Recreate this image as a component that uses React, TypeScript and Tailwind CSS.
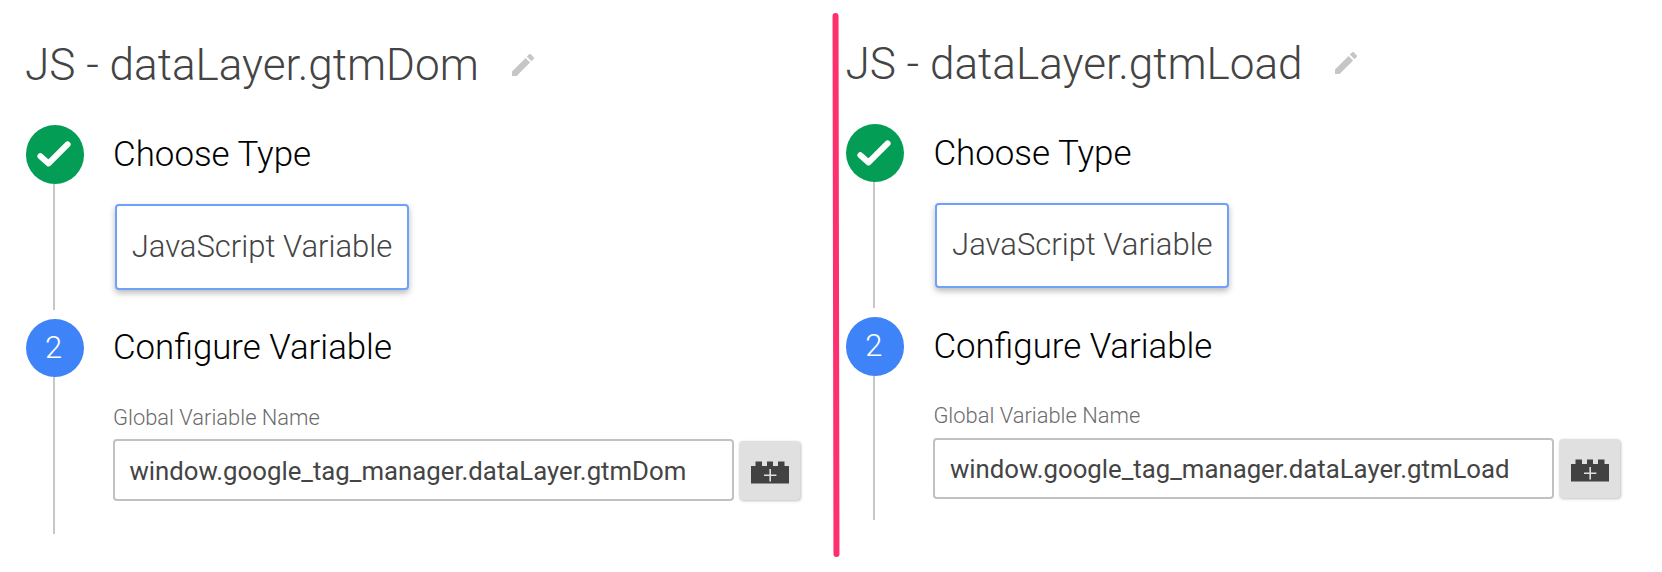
import React from "react";

type PanelProps = {
  name: string;
  titleWidth: string;
  value: string;
  className: string;
  lastLine: string;
};

function Pencil() {
  return (
    <svg viewBox="3 3 18 18" className="mt-[18.5px] h-[22px] w-[22px] shrink-0 fill-[#c6c6c6]">
      <path d="M3 17.25V21h3.75L17.81 9.94l-3.75-3.75L3 17.25zM20.71 7.04c.39-.39.39-1.02 0-1.41l-2.34-2.34c-.39-.39-1.02-.39-1.41 0l-1.83 1.83 3.75 3.75 1.83-1.83z" />
    </svg>
  );
}

function Brick() {
  return (
    <svg viewBox="0 0 38 23" className="h-[23px] w-[38px]">
      <path
        fill="#424242"
        d="M0 5h4.5V0.5h6.5V5h5V0.5h6V5h5V0.5h6.5V5H38v17.5H0z"
      />
      <path stroke="#e0e0e0" strokeWidth="1.6" d="M19.2 8v12.4M13 14.2h12.4" />
    </svg>
  );
}

function Panel({ name, titleWidth, value, className, lastLine }: PanelProps) {
  return (
    <section className={className}>
      <header className="flex h-[60px]">
        <h1 className={`${titleWidth} -ml-px whitespace-nowrap text-[44.1px] leading-[60px] text-[#444]`}>{name}</h1>
        <Pencil />
      </header>

      <div className="mt-[30px] flex h-[193.7px]">
        <div className="flex w-[58px] shrink-0 flex-col items-center">
          <div className="flex h-[58.5px] w-[58px] items-center justify-center rounded-full bg-[#039d55]">
            <svg viewBox="0 0 34 26" className="mr-[2px] h-[26px] w-[34px]">
              <path
                d="M3.4 15.2 11.6 22.4 30.6 3.4"
                fill="none"
                stroke="#fff"
                strokeWidth="6"
                strokeLinecap="round"
                strokeLinejoin="round"
              />
            </svg>
          </div>
          <div className="mr-[2px] h-[126px] w-[2px] bg-[#c8c8c8]" />
        </div>
        <div className="pl-[29px]">
          <h2 className="whitespace-nowrap pt-px text-[34.9px] leading-[57px] text-black">Choose Type</h2>
          <div className="ml-[2px] mt-[21px] flex h-[85.5px] w-[294px] items-center justify-center rounded-[4px] border-2 border-[#70a1f8] bg-white shadow-[0_3px_6px_rgba(0,0,0,0.28)]">
            <span className="whitespace-nowrap text-[31px] leading-[40px] text-[#444]">JavaScript Variable</span>
          </div>
        </div>
      </div>

      <div className="flex">
        <div className="flex w-[58px] shrink-0 flex-col items-center">
          <div className="flex h-[58.5px] w-[58px] items-center justify-center rounded-full bg-[#3f83f8]">
            <span className="mr-[3px] text-[31px] leading-[58px] text-white">2</span>
          </div>
          <div className={`mr-[2px] w-[2px] bg-[#c8c8c8] ${lastLine}`} />
        </div>
        <div className="pl-[29px]">
          <h2 className="whitespace-nowrap pt-[0.5px] text-[34.8px] leading-[57px] text-black">Configure Variable</h2>
          <label className="mt-[28.5px] block whitespace-nowrap text-[21.9px] leading-[26px] text-[#6b6b6b]">
            Global Variable Name
          </label>
          <div className="mt-[8.7px] flex gap-[5.5px]">
            <div className="flex h-[61.5px] w-[620.6px] items-center rounded-[4px] border-2 border-[#c1c1c1] bg-white pl-[14.5px] pt-px">
              <span className="whitespace-nowrap text-[25.75px] font-normal leading-[30px] text-[#444]">{value}</span>
            </div>
            <button className="mt-[1.5px] flex h-[59px] w-[61px] items-center justify-center rounded-[4px] bg-[#e0e0e0] pt-[4px] shadow-[1px_1px_3px_rgba(0,0,0,0.25)]">
              <Brick />
            </button>
          </div>
        </div>
      </div>
    </section>
  );
}

export default function App() {
  return (
    <main className="flex h-[572px] w-[1662px] overflow-hidden bg-white font-['Roboto',sans-serif] font-light">
      <Panel
        name="JS - dataLayer.gtmDom"
        titleWidth="w-[487px]"
        value="window.google_tag_manager.dataLayer.gtmDom"
        className="w-[833.3px] shrink-0 pl-[26px] pt-[35px]"
        lastLine="h-[157px]"
      />
      <div className="mt-[13px] h-[544px] w-[6px] shrink-0 -rotate-[0.1deg] rounded-full bg-[#ff2f6e]" />
      <Panel
        name="JS - dataLayer.gtmLoad"
        titleWidth="w-[490px]"
        value="window.google_tag_manager.dataLayer.gtmLoad"
        className="shrink-0 pl-[7.1px] pt-[33.5px]"
        lastLine="h-[144px]"
      />
    </main>
  );
}
